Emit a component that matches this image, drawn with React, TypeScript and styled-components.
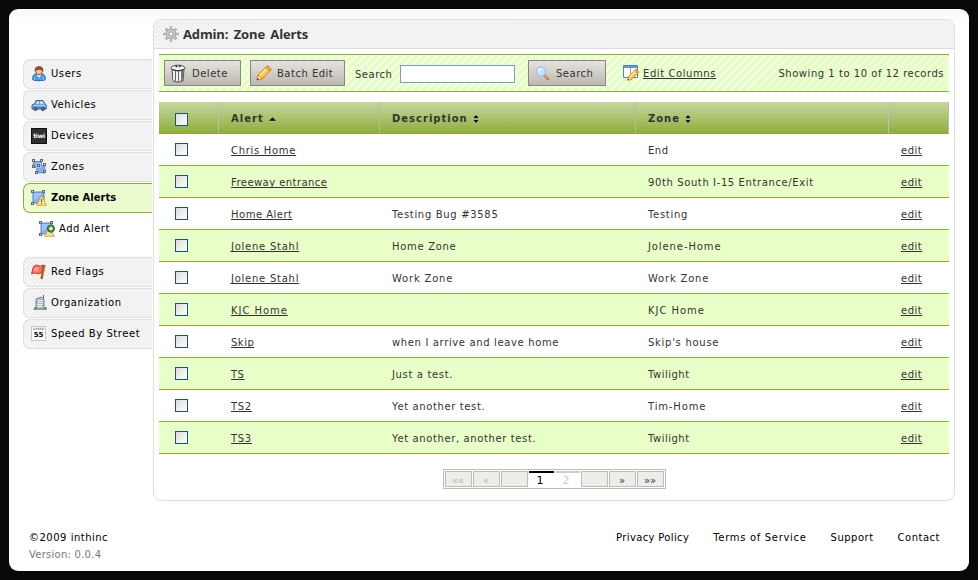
import React from "react";
import styled, { createGlobalStyle, css } from "styled-components";

const GlobalStyle = createGlobalStyle`
  * { box-sizing: border-box; }
  html, body { margin: 0; background: #080808; }
  body {
    font: 10px/16px "DejaVu Sans", Verdana, sans-serif;
    letter-spacing: 0.5px;
    color: #333;
  }
  a { color: inherit; text-decoration: none; }
  button, input { font: inherit; letter-spacing: inherit; color: inherit; }
`;

const greyStripes = css`
  background: repeating-linear-gradient(45deg, #ededed 0 1.41px, #f7f7f7 1.41px 2.83px);
`;
const greenStripes = css`
  background: repeating-linear-gradient(135deg, #e6fdc6 0 4px, #f3fee4 4px 5.66px);
`;

const Frame = styled.div`
  height: 580px;
  padding: 9px;
`;
const Page = styled.div`
  width: 960px;
  height: 562px;
  border-radius: 9px;
  background: linear-gradient(#f9f9f7, #fff 16px);
  display: flex;
  flex-direction: column;
`;
const Body = styled.div`
  display: flex;
  height: 492px;
  padding: 10px 14px 0;
`;
const Sidebar = styled.nav`
  width: 129px;
  margin-right: 1px;
  padding-top: 40px;
  display: flex;
  flex-direction: column;
  gap: 1px;
`;
const NavItem = styled.a<{ $active?: boolean; $gap?: boolean }>`
  height: 30px;
  flex: none;
  display: flex;
  align-items: center;
  gap: 4px;
  padding-left: 7px;
  padding-bottom: 1px;
  margin-top: ${(p) => (p.$gap ? "11px" : "0")};
  border: 1px solid #dfdfdf;
  border-right: 0;
  border-radius: 7px 0 0 7px;
  color: #000;
  letter-spacing: 0.55px;
  white-space: nowrap;
  ${greyStripes}
  ${(p) =>
    p.$active &&
    css`
      background: repeating-linear-gradient(45deg, #e6f9c6 0 1.41px, #effdd6 1.41px 2.83px);
      border-color: #8baf34;
      font-weight: bold;
      letter-spacing: 0;
    `}
`;
const SubItem = styled.a`
  height: 31px;
  display: flex;
  align-items: center;
  gap: 4px;
  padding: 0 0 1px 16px;
  color: #000;
`;

const Panel = styled.main`
  width: 802px;
  height: 482px;
  border: 1px solid #dedede;
  border-radius: 8px;
  background: #fff;
  overflow: hidden;
`;
const TitleBar = styled.header`
  height: 29px;
  display: flex;
  align-items: center;
  gap: 4px;
  padding-left: 9px;
  border-bottom: 1px solid #dedede;
  ${greyStripes}
`;
const Title = styled.h1`
  margin: 0;
  font: bold 13px/20px "Open Sans", "Noto Sans", sans-serif;
  letter-spacing: -0.15px;
  word-spacing: 2.2px;
`;
const Toolbar = styled.div`
  height: 38px;
  margin: 5px 5px 10px;
  padding: 0 5px;
  display: flex;
  align-items: center;
  border-top: 1px solid #8baf34;
  border-bottom: 1px solid #8baf34;
  ${greenStripes}
`;
const ToolButton = styled.button<{ $width: number; $gap?: number; $before?: number }>`
  width: ${(p) => p.$width}px;
  height: 26px;
  margin-left: ${(p) => p.$before ?? 0}px;
  padding: 0 0 0 5px;
  display: flex;
  align-items: center;
  gap: ${(p) => p.$gap ?? 5}px;
  border: 1px solid #888681;
  background: linear-gradient(#e6e2dd, #d2cec8 50%, #bdb7ae);
  white-space: nowrap;
`;
const ButtonText = styled.span`
  padding-top: 2px;
`;
const SearchLabel = styled.label`
  width: 45px;
  margin-left: 10px;
  padding-top: 3px;
`;
const SearchInput = styled.input`
  width: 115px;
  height: 18px;
  margin-top: 2px;
  padding: 0 3px;
  border: 1px solid #7f9db9;
  background: #fff;
`;
const ColumnsLink = styled.a`
  display: flex;
  align-items: center;
  gap: 4px;
  margin-left: 17px;
  letter-spacing: 0.58px;
`;
const Underlined = styled.span`
  text-decoration: underline;
  text-decoration-thickness: 1px;
  text-underline-offset: 1px;
  text-decoration-skip-ink: none;
`;
const ColumnsText = styled(Underlined)`
  padding-top: 2px;
`;
const Count = styled.span`
  margin-left: auto;
  padding-top: 2px;
  letter-spacing: 0.53px;
`;

const Row = styled.div<{ $tint?: boolean }>`
  height: 32px;
  display: grid;
  grid-template-columns: 60px 161px 256px 253px 60px;
  border-bottom: 1px solid #8baf34;
  background: ${(p) => (p.$tint ? "#e8ffc8" : "#fff")};
`;
const HeadRow = styled(Row)`
  background: linear-gradient(#c6d79f, #8fae3d);
  font-weight: bold;
  letter-spacing: 1px;
`;
const Table = styled.section`
  margin: 0 5px;
`;
const Cell = styled.div<{ $tracking?: number }>`
  padding: 2px 0 0 12px;
  display: flex;
  align-items: center;
  letter-spacing: ${(p) => p.$tracking ?? 0.5}px;
  white-space: nowrap;
`;
const HeadCell = styled(Cell)<{ $line?: boolean }>`
  padding-top: 3px;
  gap: 4px;
  letter-spacing: 1px;
  border-right: 1px solid ${(p) => (p.$line ? "#bdbdbb" : "#b5bd9d")};
`;
const CheckCell = styled.div<{ $head?: boolean }>`
  padding: ${(p) => (p.$head ? 11 : 9)}px 0 0 16px;
  border-right: ${(p) => (p.$head ? "1px solid #bdbdbb" : "0")};
`;
const Check = styled.input.attrs({ type: "checkbox" })`
  appearance: none;
  display: block;
  width: 13px;
  height: 13px;
  margin: 0;
  border: 1px solid #1c5180;
  background: linear-gradient(135deg, #dcdcd7, #fff);
`;

const Pager = styled.div`
  width: 223px;
  height: 20px;
  margin: 15px auto 0;
  padding: 1px;
  display: flex;
  gap: 1px;
  border: 1px solid #bebab5;
`;
const PagerCell = styled.span<{ $off?: boolean }>`
  width: 27px;
  height: 16px;
  border: 1px solid #bebab5;
  background: #f0ede9;
  color: ${(p) => (p.$off ? "#b6b2ad" : "#333")};
  text-align: center;
  line-height: 17px;
  letter-spacing: 0;
`;
const PageNumber = styled.span<{ $current?: boolean }>`
  width: 25px;
  height: 16px;
  border-top: 2px solid ${(p) => (p.$current ? "#000" : "#cfccc6")};
  color: ${(p) => (p.$current ? "#000" : "#ccc")};
  font-size: 11px;
  line-height: 15px;
  letter-spacing: 0;
  padding-right: 2px;
  text-align: center;
`;

const Footer = styled.footer`
  height: 70px;
  padding: 28px 29px 0 20px;
  display: flex;
  justify-content: space-between;
  color: #000;
`;
const Copyright = styled.div`
  line-height: 17px;
`;
const Version = styled.div`
  color: #777;
  letter-spacing: 0.25px;
`;
const FooterLinks = styled.div`
  display: flex;
  gap: 24px;
  line-height: 17px;
`;
const FooterLink = styled.a<{ $tracking?: number }>`
  letter-spacing: ${(p) => p.$tracking ?? 0.5}px;
`;

const Svg = styled.svg`
  display: block;
  flex: none;
`;
const Icon = ({ size = 16, box = 16, children }: { size?: number; box?: number; children: React.ReactNode }) => (
  <Svg width={size} height={size} viewBox={`0 0 ${box} ${box}`}>
    {children}
  </Svg>
);

const UserIcon = () => (
  <Icon>
    <path d="M2 14Q.8 9 5 7.800h6Q15.200 9 14 14Q8 15.500 2 14Z" fill="#4c9df0" stroke="#2863b5" />
    <path d="M5.500 8.500 8 12l2.500-3.500Z" fill="#d8efff" />
    <path d="M3.500 11.500v2.300M12.500 11.500v2.300" stroke="#9bd0ff" />
    <ellipse cx="8" cy="5" rx="3.500" ry="3.700" fill="#f9c48d" stroke="#a4602d" />
    <path d="M4 5.200Q3.500.6 8 .6T12 5.200Q11 3.300 8 3.500T4 5.200Z" fill="#925022" stroke="#75401f" strokeWidth=".6" />
  </Icon>
);
const CarIcon = () => (
  <Icon>
    <path d="M1 11V8L3.700 6.500 5 3.500h7l1.700 3L15.300 8v4H1Z" fill="#6aa0d9" stroke="#3869a4" />
    <path d="M5 6.700 6 4.600h2v2.100ZM9 4.600h2.500l1.200 2.100H9Z" fill="#d4edfb" />
    <path d="M2 8.500h12.500" stroke="#a9d3f6" />
    <circle cx="4.500" cy="12" r="1.500" fill="#657180" stroke="#35445a" />
    <circle cx="12" cy="12" r="1.500" fill="#657180" stroke="#35445a" />
    <path d="M6.500 11h3.500" stroke="#3c6eaa" />
  </Icon>
);
const TiwiMark = styled.span`
  width: 16px;
  height: 16px;
  flex: none;
  background: #303030;
  border: 1px solid #111;
  color: #fff;
  font: bold 6px/14px "DejaVu Sans", sans-serif;
  letter-spacing: -0.2px;
  text-align: center;
`;
const Handle = ({ x, y }: { x: number; y: number }) => (
  <rect x={x + 0.5} y={y + 0.5} width="2" height="2" fill="#e5e5e5" stroke="#666" />
);
const ZonesIcon = () => (
  <Icon>
    <path d="M2.500 2.500h8l-.5 4 4-.5-.5 8-8-.5L6 9 2 8Z" fill="#7caef0" stroke="#5b8bd4" />
    <path d="M5 4h5v5H5Z" fill="#9bc5fa" />
    <Handle x={1} y={0} /><Handle x={9} y={0} /><Handle x={1} y={6} />
    <Handle x={12} y={4} /><Handle x={6} y={5} /><Handle x={4} y={12} /><Handle x={12} y={11} />
  </Icon>
);
const ZoneBase = () => (
  <>
    <path d="M2 2h11v11H2Z" fill="#83b2f1" stroke="#5984ce" />
    <path d="M3 3h9L3 11Z" fill="#9bc4f8" />
    <Handle x={0} y={0} /><Handle x={11} y={0} /><Handle x={0} y={12} />
  </>
);
const ZoneAlertIcon = () => (
  <Icon>
    <ZoneBase />
    <path d="M10.500 5.500 5.600 15.200h9.900Z" fill="#ffe3a0" stroke="#e59b2d" />
    <path d="M10.500 9v3M10.500 13v1" stroke="#6e4913" />
  </Icon>
);
const AddAlertIcon = () => (
  <Icon>
    <ZoneBase />
    <path d="M10 7 5.600 15.200h9.900Z" fill="#ffe09a" stroke="#e59b2d" />
    <circle cx="11.900" cy="7.600" r="3.600" fill="#3b8b36" stroke="#276e26" />
    <path d="M11.900 5.500v4M9.900 7.500h4" stroke="#fff" strokeWidth="1.400" />
  </Icon>
);
const FlagIcon = () => (
  <Icon>
    <path d="M13.500 1 10.500 15" stroke="#915119" strokeWidth="2.300" />
    <path d="M14 1.500 11.500 14" stroke="#dea45c" strokeWidth=".8" />
    <path d="M12 1Q9.500 3 7.500 1.500T2.500 2.500L.5 10q3-1.700 5-.7T10.500 9Z" fill="#fa7166" stroke="#d72f2a" />
    <path d="M4 3.500 2.700 7.500q2-1 4 .5L7.500 4Z" fill="#ffa69c" />
  </Icon>
);
const BuildingIcon = () => (
  <Icon>
    <path d="M5 14V4l5-2 3 2v10Z" fill="#a9b8ca" stroke="#78889a" />
    <path d="M6.500 5.500h5M6.500 7.500h5M6.500 9.500h5M6.500 11.500h5" stroke="#edf8ff" />
    <path d="M12.500 0v3" stroke="#df3030" />
    <path d="M2.500 14.500q1.500-5 3.500-1l1 1ZM12.500 14.500q1.500-5 3.500-1v1Z" fill="#4c9750" />
    <path d="M2.500 14.500H16" stroke="#89a887" />
  </Icon>
);
const SpeedSign = styled.span`
  width: 15px;
  height: 15px;
  margin-right: 1px;
  flex: none;
  border: 1px solid #c8c8c8;
  background: #fff;
  text-align: center;
  font: bold 7px/7px "DejaVu Sans", sans-serif;
  letter-spacing: 0;
`;
const SignLimit = styled.span`
  display: block;
  font-size: 3px;
  line-height: 5px;
  color: #888;
`;
const GearIcon = () => (
  <Icon>
    <g stroke="#a2a2a2" strokeWidth="2.600">
      <path d="M8 .3v15.400M.3 8h15.400M2.600 2.600l10.800 10.800M2.600 13.400 13.400 2.600" />
    </g>
    <g stroke="#d0d0d0" strokeWidth="1.200">
      <path d="M8 1v14M1 8h14M3.200 3.200l9.600 9.600M3.200 12.800l9.600-9.600" />
    </g>
    <circle cx="8" cy="8" r="4.800" fill="#cbcbcb" stroke="#a5a5a5" />
    <circle cx="8" cy="8" r="2.200" fill="#f4f4f4" stroke="#989898" />
  </Icon>
);
const TrashIcon = () => (
  <Svg width="16" height="19" viewBox="0 0 16 19">
    <path d="M2 5h12l-1 12Q8 19.500 3 17Z" fill="#dededb" stroke="#555" />
    <path d="M11 6h2.600l-1 11-1.600.6Z" fill="#777" />
    <path d="M5.500 7v10.500M8.500 7v10.500" stroke="#666" />
    <path d="M4 7v9.500M7 7.500v9.500M10 7.500v9" stroke="#fff" />
    <ellipse cx="8" cy="4" rx="7" ry="2.800" fill="#f4f4f2" stroke="#555" />
    <path d="M5.500 1.500 7 3M10.500 1.500 9 3" stroke="#222" strokeWidth="1.500" />
    <path d="M2 5.500Q8 8 14 5.500" stroke="#333" fill="none" />
  </Svg>
);
const pencilBody = (
  <>
    <path d="m1 15 1-5L11.500.8l3.700 3.700L6 14Z" fill="#ffc94a" stroke="#c67b1d" />
    <path d="M3.500 10.500 11 3" stroke="#fff3a6" strokeWidth="1.500" />
    <path d="m10 2.500 1.500-1.700 3.700 3.700-1.500 1.700Z" fill="#f5b18c" stroke="#c67b1d" />
    <path d="m2 10 4 4-5 1Z" fill="#f9dfb8" stroke="#c67b1d" strokeWidth=".6" />
    <path d="m1 15 .5-2L3 14.500Z" fill="#333" />
  </>
);
const PencilIcon = () => <Icon>{pencilBody}</Icon>;
const SearchIcon = () => (
  <Icon>
    <path d="m10 10.200 4 4" stroke="#b47855" strokeWidth="2.600" strokeLinecap="round" />
    <path d="m10.500 10.500 3 3" stroke="#f3bd93" />
    <circle cx="7" cy="6.500" r="4.600" fill="#c4e4fc" stroke="#9fc2ea" strokeWidth="1.400" />
    <path d="M4.300 6.200Q4.800 3.700 7.300 3.700" stroke="#fff" strokeWidth="1.300" fill="none" />
  </Icon>
);
const ColumnsIcon = () => (
  <Icon>
    <path d="M.5.500h14v12H.5Z" fill="#fff" stroke="#4d83be" />
    <path d="M1 1h13v2H1Z" fill="#6699ce" />
    <path d="M7.500 3v9" stroke="#78a5d2" />
    <g transform="translate(4 3.500) scale(.78)">{pencilBody}</g>
  </Icon>
);
const SortUp = () => (
  <Svg width="9" height="6" viewBox="0 0 9 6">
    <path d="M.5 5h8l-4-4Z" fill="#000" stroke="#fff" strokeOpacity=".6" strokeWidth=".6" />
  </Svg>
);
const SortBoth = () => (
  <Svg width="8" height="10" viewBox="0 0 8 10">
    <path d="M.8 4.300h6.400L4 .7ZM.8 5.700h6.400L4 9.300Z" fill="#000" stroke="#fff" strokeOpacity=".6" strokeWidth=".6" />
  </Svg>
);

type Text = [label: string, tracking?: number];

const records: [Text, Text, Text][] = [
  [["Chris Home", 0.7], [""], ["End"]],
  [["Freeway entrance", 0.44], [""], ["90th South I-15 Entrance/Exit", 0.61]],
  [["Home Alert"], ["Testing Bug #3585", 0.68], ["Testing", 0.7]],
  [["Jolene Stahl", 0.75], ["Home Zone", 0.7], ["Jolene-Home", 0.9]],
  [["Jolene Stahl", 0.75], ["Work Zone", 0.8], ["Work Zone", 0.8]],
  [["KJC Home", 0.95], [""], ["KJC Home", 0.95]],
  [["Skip"], ["when I arrive and leave home", 0.64], ["Skip's house", 0.72]],
  [["TS"], ["Just a test.", 0.65], ["Twilight"]],
  [["TS2", 0.7], ["Yet another test.", 0.62], ["Tim-Home", 0.85]],
  [["TS3", 0.7], ["Yet another, another test.", 0.62], ["Twilight"]],
];

export default function App() {
  return (
    <Frame>
      <GlobalStyle />
      <Page>
        <Body>
          <Sidebar>
            <NavItem><UserIcon />Users</NavItem>
            <NavItem><CarIcon />Vehicles</NavItem>
            <NavItem><TiwiMark>tiwi</TiwiMark>Devices</NavItem>
            <NavItem><ZonesIcon />Zones</NavItem>
            <NavItem $active><ZoneAlertIcon />Zone Alerts</NavItem>
            <SubItem><AddAlertIcon />Add Alert</SubItem>
            <NavItem $gap><FlagIcon />Red Flags</NavItem>
            <NavItem><BuildingIcon />Organization</NavItem>
            <NavItem><SpeedSign><SignLimit>SPEED</SignLimit>55</SpeedSign>Speed By Street</NavItem>
          </Sidebar>
          <Panel>
            <TitleBar>
              <GearIcon />
              <Title>Admin: Zone Alerts</Title>
            </TitleBar>
            <Toolbar>
              <ToolButton $width={77} $gap={6}><TrashIcon /><ButtonText>Delete</ButtonText></ToolButton>
              <ToolButton $width={95} $before={9}><PencilIcon /><ButtonText>Batch Edit</ButtonText></ToolButton>
              <SearchLabel htmlFor="search">Search</SearchLabel>
              <SearchInput id="search" />
              <ToolButton $width={78} $before={13} $gap={6}><SearchIcon /><ButtonText>Search</ButtonText></ToolButton>
              <ColumnsLink><ColumnsIcon /><ColumnsText>Edit Columns</ColumnsText></ColumnsLink>
              <Count>Showing 1 to 10 of 12 records</Count>
            </Toolbar>
            <Table>
              <HeadRow>
                <CheckCell $head><Check /></CheckCell>
                <HeadCell>Alert<SortUp /></HeadCell>
                <HeadCell>Description<SortBoth /></HeadCell>
                <HeadCell $line>Zone<SortBoth /></HeadCell>
                <HeadCell $line />
              </HeadRow>
              {records.map(([alert, description, zone], i) => (
                <Row key={i} $tint={i % 2 === 1}>
                  <CheckCell><Check /></CheckCell>
                  <Cell $tracking={alert[1]}><Underlined>{alert[0]}</Underlined></Cell>
                  <Cell $tracking={description[1]}>{description[0]}</Cell>
                  <Cell $tracking={zone[1]}>{zone[0]}</Cell>
                  <Cell><Underlined>edit</Underlined></Cell>
                </Row>
              ))}
            </Table>
            <Pager>
              <PagerCell $off>««</PagerCell>
              <PagerCell $off>«</PagerCell>
              <PagerCell />
              <PageNumber $current>1</PageNumber>
              <PageNumber>2</PageNumber>
              <PagerCell />
              <PagerCell>»</PagerCell>
              <PagerCell>»»</PagerCell>
            </Pager>
          </Panel>
        </Body>
        <Footer>
          <Copyright>
            ©2009 inthinc
            <Version>Version: 0.0.4</Version>
          </Copyright>
          <FooterLinks>
            <FooterLink $tracking={0.36}>Privacy Policy</FooterLink>
            <FooterLink $tracking={0.68}>Terms of Service</FooterLink>
            <FooterLink>Support</FooterLink>
            <FooterLink>Contact</FooterLink>
          </FooterLinks>
        </Footer>
      </Page>
    </Frame>
  );
}
